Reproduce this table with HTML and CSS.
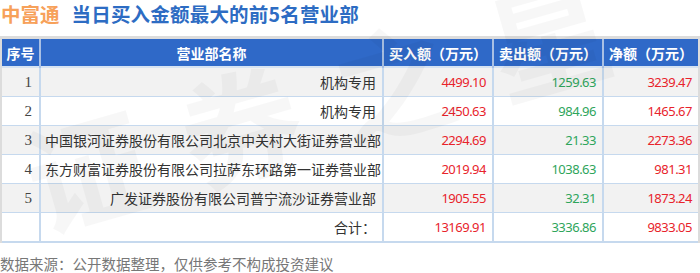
FILE: index.html
```html
<!DOCTYPE html>
<html lang="zh">
<head>
<meta charset="utf-8">
<link rel="stylesheet" href="styles.css">
</head>
<body>
<div class="page">
  <h1 class="title"><span class="brand">中富通</span><span class="headline">当日买入金额最大的前5名营业部</span></h1>
  <div class="frame">
    <table class="grid">
      <colgroup>
        <col class="c-no"><col class="c-name"><col class="c-num"><col class="c-num"><col class="c-net">
      </colgroup>
      <thead>
        <tr><th>序号</th><th>营业部名称</th><th>买入额（万元）</th><th>卖出额（万元）</th><th>净额（万元）</th></tr>
      </thead>
      <tbody>
        <tr class="odd"><td class="no">1</td><td class="name">机构专用</td><td class="red">4499.10</td><td class="green">1259.63</td><td class="red">3239.47</td></tr>
        <tr><td class="no">2</td><td class="name">机构专用</td><td class="red">2450.63</td><td class="green">984.96</td><td class="red">1465.67</td></tr>
        <tr class="odd"><td class="no">3</td><td class="name">中国银河证券股份有限公司北京中关村大街证券营业部</td><td class="red">2294.69</td><td class="green">21.33</td><td class="red">2273.36</td></tr>
        <tr><td class="no">4</td><td class="name">东方财富证券股份有限公司拉萨东环路第一证券营业部</td><td class="red">2019.94</td><td class="green">1038.63</td><td class="red">981.31</td></tr>
        <tr class="odd"><td class="no">5</td><td class="name">广发证券股份有限公司普宁流沙证券营业部</td><td class="red">1905.55</td><td class="green">32.31</td><td class="red">1873.24</td></tr>
        <tr><td class="no"></td><td class="name">合计：</td><td class="red">13169.91</td><td class="green">3336.86</td><td class="red">9833.05</td></tr>
      </tbody>
    </table>
  </div>
  <p class="source">数据来源：公开数据整理，仅供参考不构成投资建议</p>
  <div class="watermark" aria-hidden="true">证券之星</div>
</div>
</body>
</html>
```

FILE: styles.css
```css
html, body {
  margin: 0;
  padding: 0;
  background: #ffffff;
}
.page {
  position: relative;
  width: 700px;
  height: 273px;
  overflow: hidden;
  font-family: "Noto Sans CJK SC", "Noto Sans", sans-serif;
  color: #333333;
}
.title {
  margin: 0;
  padding: 0 0 0 1px;
  font-size: 19.5px;
  line-height: 28px;
  font-weight: 700;
  white-space: nowrap;
}
.brand {
  color: #f7a15a;
  margin-right: 12px;
}
.headline {
  color: #2d6cc3;
  letter-spacing: 0.2px;
}
.frame {
  margin: 8px 2px 0 0;
  border-top: 3px solid #dcdcdc;
  border-left: 2px solid #dcdcdc;
  border-right: 2px solid #dcdcdc;
  width: 696px;
}
.grid {
  width: 100%;
  border-collapse: collapse;
  table-layout: fixed;
  font-size: 14px;
}
.c-no { width: 38px; }
.c-name { width: 343px; }
.c-num { width: 110px; }
.c-net { width: auto; }
.grid th {
  background: #2f69c8;
  color: #ffffff;
  font-weight: 700;
  font-size: 14px;
  height: 27px;
  padding: 0;
  border-left: 2px solid #a9c0e4;
  text-align: center;
}
.grid th:first-child {
  border-left: none;
}
.grid td {
  height: 28px;
  padding: 0 6px 0 4px;
  border: 1px solid #c6d9ee;
  border-width: 1px 2px;
  text-align: right;
  white-space: nowrap;
  overflow: hidden;
}
.grid tbody tr:first-child td {
  border-top: 2px solid #d6e3f2;
}
.grid tbody tr:last-child td {
  border-bottom: 2px solid #c6d9ee;
}
.grid td:first-child {
  border-left: none;
}
.grid td:last-child {
  border-right: none;
}
.grid tr.odd td {
  background: #f2f2f2;
}
.grid td.no {
  font-family: "Liberation Serif", "Noto Serif", serif;
  font-size: 15px;
  color: #444444;
  padding-right: 7px;
}
.grid td.name {
  color: #333333;
}
.grid td.red,
.grid td.green {
  font-family: "Noto Sans", sans-serif;
  font-size: 13px;
  letter-spacing: -0.5px;
}
.red { color: #e8232b; }
.green { color: #2ea55b; }
.source {
  margin: 11px 0 0 0;
  font-size: 14.5px;
  color: #777777;
  line-height: 20px;
}
.watermark {
  position: absolute;
  left: 10px;
  top: 120px;
  font-size: 120px;
  line-height: 130px;
  font-weight: 700;
  letter-spacing: 40px;
  color: rgba(0, 0, 0, 0.03);
  transform: rotate(-16deg);
  transform-origin: left top;
  white-space: nowrap;
  pointer-events: none;
}
```
